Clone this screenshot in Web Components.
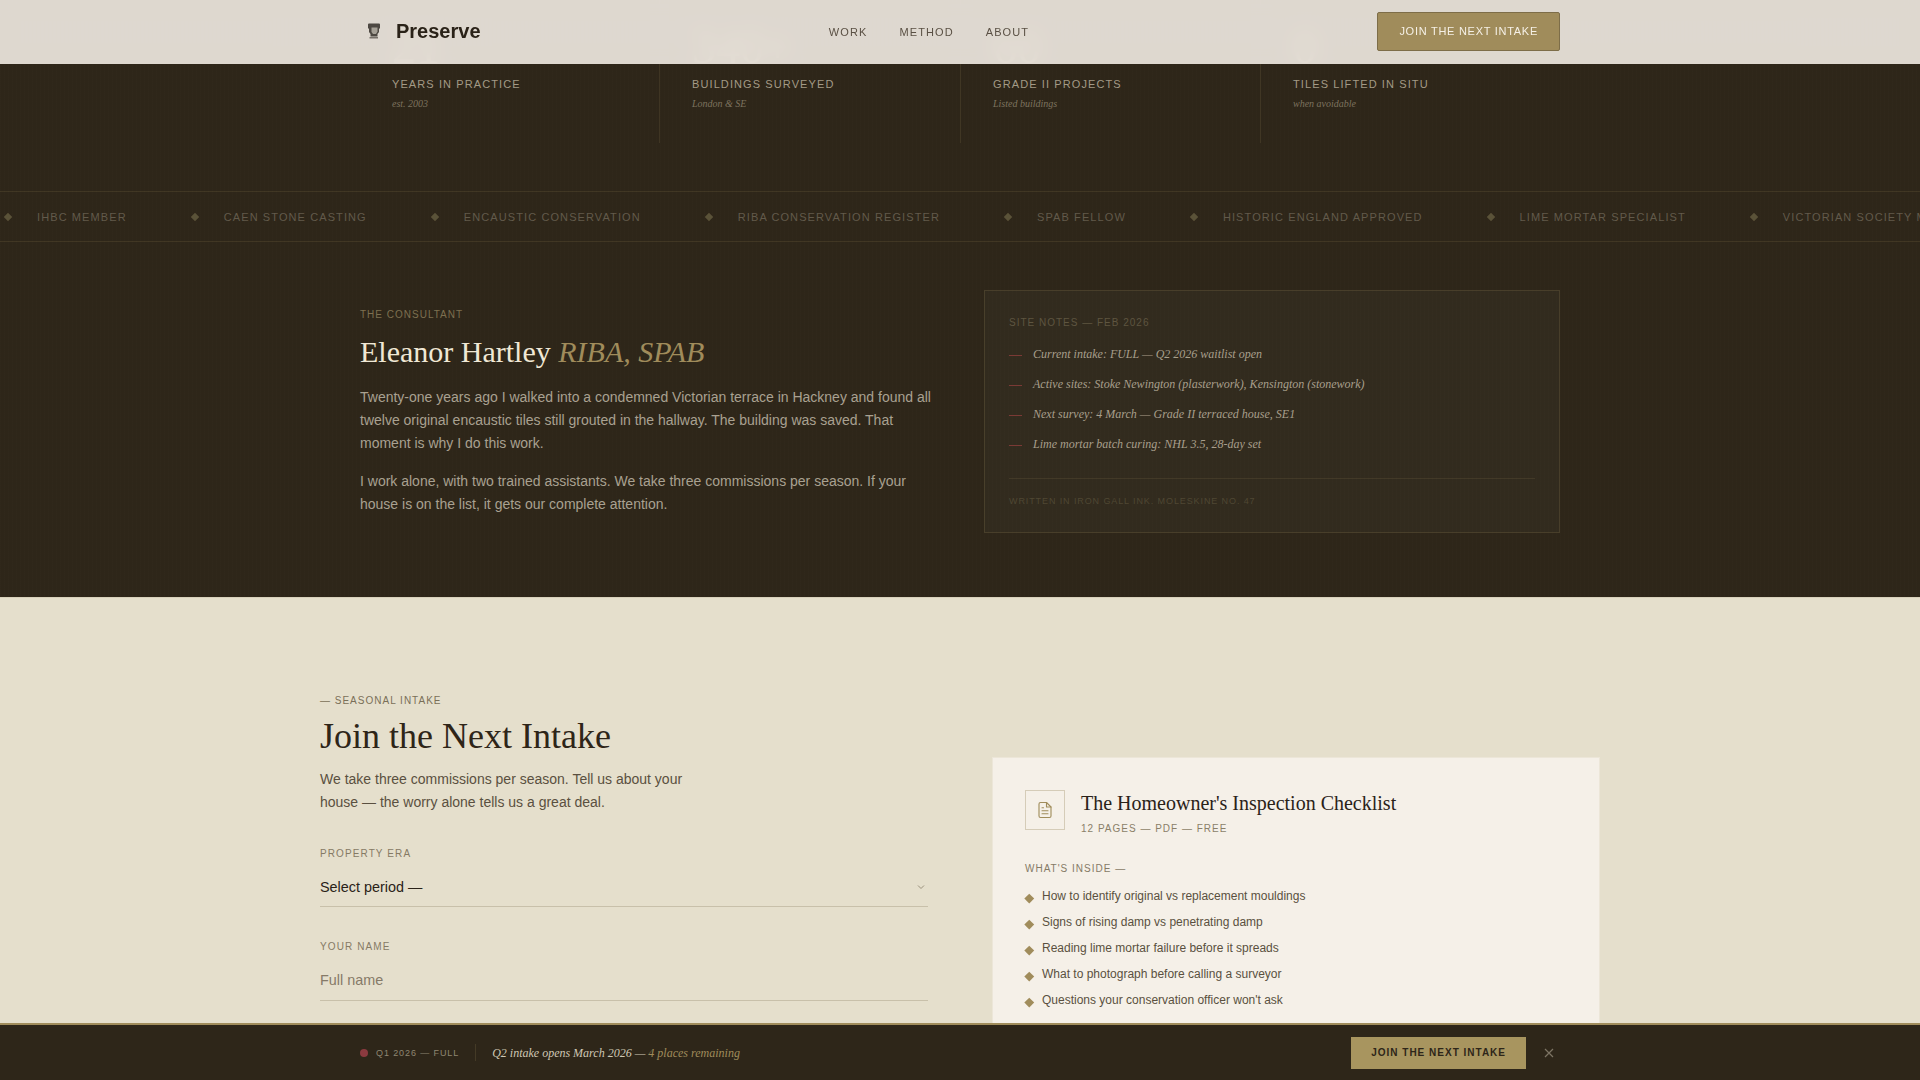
<!DOCTYPE html>
<html lang="en">
<head>
<meta charset="utf-8">
<title>Preserve</title>
<style>
  html, body { margin: 0; height: 1080px; overflow: hidden; background: #2e2619; }
  body {
    font-family: "Liberation Sans", Arial, sans-serif;
    background-image:
      repeating-linear-gradient(90deg, rgba(255, 255, 255, 0.006) 0 1px, transparent 1px 4px),
      repeating-linear-gradient(0deg, rgba(0, 0, 0, 0.012) 0 1px, transparent 1px 4px);
  }
  main { display: block; margin-top: -13px; }
</style>
</head>
<body>
<site-nav></site-nav>
<main>
  <stat-row>
    <stat-item num="21" label="Years in practice" note="est. 2003"></stat-item>
    <stat-item num="340+" label="Buildings surveyed" note="London &amp; SE"></stat-item>
    <stat-item num="60" label="Grade II projects" note="Listed buildings"></stat-item>
    <stat-item num="0" label="Tiles lifted in situ" note="when avoidable"></stat-item>
  </stat-row>
  <cred-strip></cred-strip>
  <consultant-section>
    <site-notes></site-notes>
  </consultant-section>
  <intake-section>
    <form-field label="Property era" value="Select period —" kind="select"></form-field>
    <form-field label="Your name" value="Full name"></form-field>
    <checklist-card slot="aside"></checklist-card>
  </intake-section>
</main>
<intake-bar></intake-bar>

<script>
class SiteNav extends HTMLElement {
  constructor() {
    super();
    this.attachShadow({ mode: 'open' });
    this.shadowRoot.innerHTML = `
      <style>
        :host {
          display: block;
          position: fixed;
          top: 0; left: 0; right: 0;
          z-index: 10;
          box-sizing: border-box;
          height: 64px;
          padding-bottom: 1px;
          background: rgba(229, 223, 215, 0.965);
          backdrop-filter: blur(8px);
        }
        .inner {
          box-sizing: border-box;
          width: 1200px;
          height: 100%;
          margin: 0 auto;
          display: flex;
          justify-content: space-between;
          align-items: center;
        }
        .logo {
          display: flex;
          align-items: center;
          gap: 15px;
          padding-left: 7px;
          font-size: 20px;
          font-weight: 700;
          color: #2a2218;
        }
        .logo svg { display: block; margin-top: -2px; }
        nav {
          display: flex;
          gap: 32px;
          font-size: 11px;
          letter-spacing: 0.1em;
          color: #5a5044;
        }
        .cta span {
          display: block;
          box-sizing: border-box;
          height: 39px;
          line-height: 37px;
          padding: 0 21px;
          font-size: 11px;
          letter-spacing: 0.066em;
          color: #f5f0e6;
          background: #a08c5b;
          border: 1px solid #7d6d48;
          border-radius: 2px;
        }
      </style>
      <div class="inner">
        <div class="logo">
          <svg width="14" height="16" viewBox="0 0 14 16">
            <path d="M1 1.500q0-1 1-1h10q1 0 1 1V5l-1 1v3l-1.500 2v2.500h-7V11L2 9V6L1 5z" fill="#4d4842"/>
            <path d="M4.500 4.500h6v4l-1.500 2.500H6L4.500 9z" fill="#a5a096"/>
            <path d="M2.500 14h8.500v1.500H2.500z" fill="#77716a"/>
          </svg>
          <span>Preserve</span>
        </div>
        <nav><span>WORK</span><span>METHOD</span><span>ABOUT</span></nav>
        <div class="cta"><span>JOIN THE NEXT INTAKE</span></div>
      </div>
    `;
  }
}
customElements.define('site-nav', SiteNav);

class StatRow extends HTMLElement {
  constructor() {
    super();
    this.attachShadow({ mode: 'open' });
    this.shadowRoot.innerHTML = `
      <style>
        :host {
          display: grid;
          grid-template-columns: 300px 301px 300px 299px;
          justify-content: center;
          padding-bottom: 48px;
        }
      </style>
      <slot></slot>
    `;
  }
}
customElements.define('stat-row', StatRow);

class StatItem extends HTMLElement {
  constructor() {
    super();
    this.attachShadow({ mode: 'open' });
    const num = this.getAttribute('num');
    const label = this.getAttribute('label');
    const note = this.getAttribute('note');
    this.shadowRoot.innerHTML = `
      <style>
        :host {
          display: block;
          box-sizing: border-box;
          padding: 36px 32px 32px;
          border-right: 1px solid rgba(160, 140, 91, 0.15);
        }
        :host(:last-child) { border-right: none; }
        .num {
          font: 48px/48px "Liberation Serif", serif;
          color: #f0e4c8;
          margin-bottom: 5px;
        }
        .label {
          font-size: 11px;
          line-height: 16px;
          letter-spacing: 0.1em;
          text-transform: uppercase;
          color: #a39a86;
        }
        .note {
          margin-top: 5px;
          font: italic 10px/14px "Liberation Serif", serif;
          color: #7d735f;
        }
      </style>
      <div class="num">${num}</div>
      <div class="label">${label}</div>
      <div class="note">${note}</div>
    `;
  }
}
customElements.define('stat-item', StatItem);

class CredStrip extends HTMLElement {
  constructor() {
    super();
    this.attachShadow({ mode: 'open' });
    const items = ['IHBC Member', 'Caen Stone Casting', 'Encaustic Conservation', 'RIBA Conservation Register',
      'SPAB Fellow', 'Historic England Approved', 'Lime Mortar Specialist', 'Victorian Society Member'];
    this.shadowRoot.innerHTML = `
      <style>
        :host {
          display: block;
          overflow: hidden;
          border-top: 1px solid rgba(160, 140, 91, 0.16);
          border-bottom: 1px solid rgba(160, 140, 91, 0.16);
        }
        .track {
          display: flex;
          width: max-content;
          height: 49px;
          align-items: center;
          margin-left: 5px;
        }
        .item {
          display: flex;
          align-items: center;
          gap: 26px;
          padding-right: 65px;
          font-size: 11px;
          letter-spacing: 0.1em;
          text-transform: uppercase;
          color: #625a4b;
        }
        i {
          display: block;
          width: 6px;
          height: 6px;
          transform: rotate(45deg);
          background: #5a5238;
        }
      </style>
      <div class="track">
        ${items.map(t => `<div class="item"><i></i><span>${t}</span></div>`).join('')}
      </div>
    `;
  }
}
customElements.define('cred-strip', CredStrip);

class ConsultantSection extends HTMLElement {
  constructor() {
    super();
    this.attachShadow({ mode: 'open' });
    this.shadowRoot.innerHTML = `
      <style>
        :host {
          display: grid;
          grid-template-columns: 576px 576px;
          gap: 48px;
          justify-content: center;
          align-items: start;
          padding: 48px 0 64px;
        }
        .copy { padding-top: 18px; }
        .eyebrow {
          font-size: 10px;
          line-height: 14px;
          letter-spacing: 0.1em;
          color: #7d7050;
        }
        h2 {
          margin: 10px 0 14px;
          font: 400 30px/40px "Liberation Serif", serif;
          color: #f0e8d5;
        }
        h2 em { color: #a08c5b; }
        p {
          margin: 0 0 15px;
          font-size: 14px;
          line-height: 23px;
          color: #a9a191;
        }
        p:last-child { margin-bottom: 0; }
      </style>
      <div class="copy">
        <div class="eyebrow">THE CONSULTANT</div>
        <h2>Eleanor Hartley <em>RIBA, SPAB</em></h2>
        <p>Twenty-one years ago I walked into a condemned Victorian terrace in Hackney and found all twelve original encaustic tiles still grouted in the hallway. The building was saved. That moment is why I do this work.</p>
        <p>I work alone, with two trained assistants. We take three commissions per season. If your house is on the list, it gets our complete attention.</p>
      </div>
      <slot></slot>
    `;
  }
}
customElements.define('consultant-section', ConsultantSection);

class SiteNotes extends HTMLElement {
  constructor() {
    super();
    this.attachShadow({ mode: 'open' });
    const notes = ['Current intake: FULL — Q2 2026 waitlist open',
      'Active sites: Stoke Newington (plasterwork), Kensington (stonework)',
      'Next survey: 4 March — Grade II terraced house, SE1',
      'Lime mortar batch curing: NHL 3.5, 28-day set'];
    this.shadowRoot.innerHTML = `
      <style>
        :host {
          display: block;
          box-sizing: border-box;
          height: 243px;
          padding: 25px 24px 0;
          background: rgba(255, 250, 235, 0.025);
          border: 1px solid rgba(160, 140, 91, 0.2);
        }
        .head {
          font-size: 10px;
          line-height: 14px;
          letter-spacing: 0.1em;
          color: #5e5540;
          margin-bottom: 9px;
        }
        .note {
          display: flex;
          gap: 11px;
          height: 30px;
          align-items: center;
          font: italic 12px/16px "Liberation Serif", serif;
          color: #a89f8c;
        }
        .note i {
          display: block;
          width: 13px;
          height: 1px;
          margin-top: 2px;
          background: #7a3a35;
        }
        .foot {
          margin-top: 19px;
          padding-top: 16px;
          border-top: 1px solid rgba(160, 140, 91, 0.15);
          font-size: 9px;
          line-height: 13px;
          letter-spacing: 0.1em;
          color: #4f4733;
        }
      </style>
      <div class="head">SITE NOTES — FEB 2026</div>
      ${notes.map(n => `<div class="note"><i></i><span>${n}</span></div>`).join('')}
      <div class="foot">WRITTEN IN IRON GALL INK. MOLESKINE NO. 47</div>
    `;
  }
}
customElements.define('site-notes', SiteNotes);

class IntakeSection extends HTMLElement {
  constructor() {
    super();
    this.attachShadow({ mode: 'open' });
    this.shadowRoot.innerHTML = `
      <style>
        :host {
          display: block;
          background: #e5dfcc;
          border-top: 1px solid #d8d1bb;
          padding: 96px 0 120px;
        }
        .grid {
          display: grid;
          grid-template-columns: 608px 608px;
          gap: 64px;
          justify-content: center;
          align-items: start;
        }
        .eyebrow {
          font-size: 10px;
          line-height: 14px;
          letter-spacing: 0.1em;
          color: #7a6f58;
        }
        h2 {
          margin: 6px 0 10px;
          font: 400 36px/44px "Liberation Serif", serif;
          color: #2e2518;
        }
        p {
          margin: 0 0 33px;
          width: 400px;
          font-size: 14px;
          line-height: 23px;
          color: #5a5040;
        }
        aside { margin-top: 63px; }
      </style>
      <div class="grid">
        <div>
          <div class="eyebrow">— SEASONAL INTAKE</div>
          <h2>Join the Next Intake</h2>
          <p>We take three commissions per season. Tell us about your house — the worry alone tells us a great deal.</p>
          <slot></slot>
        </div>
        <aside><slot name="aside"></slot></aside>
      </div>
    `;
  }
}
customElements.define('intake-section', IntakeSection);

class FormField extends HTMLElement {
  constructor() {
    super();
    this.attachShadow({ mode: 'open' });
    const isSelect = this.getAttribute('kind') === 'select';
    this.shadowRoot.innerHTML = `
      <style>
        :host { display: block; margin-bottom: 33px; }
        label {
          display: block;
          font-size: 10px;
          line-height: 14px;
          letter-spacing: 0.11em;
          text-transform: uppercase;
          color: #857a64;
          margin-bottom: 9px;
        }
        .box {
          display: flex;
          justify-content: space-between;
          align-items: center;
          box-sizing: border-box;
          height: ${isSelect ? 37 : 38}px;
          padding-bottom: ${isSelect ? 2 : 3}px;
          font-size: 14.400px;
          color: ${isSelect ? '#2a2218' : '#857a68'};
          border-bottom: 1px solid #c8c0aa;
        }
        svg { margin-right: 3px; }
      </style>
      <label>${this.getAttribute('label')}</label>
      <div class="box">
        <span>${this.getAttribute('value')}</span>
        ${isSelect ? '<svg width="8" height="8" viewBox="0 0 8 8" fill="none" stroke="#9a917c"><path d="M1 2.500l3 3 3-3"/></svg>' : ''}
      </div>
    `;
  }
}
customElements.define('form-field', FormField);

class ChecklistCard extends HTMLElement {
  constructor() {
    super();
    this.attachShadow({ mode: 'open' });
    const points = ['How to identify original vs replacement mouldings',
      'Signs of rising damp vs penetrating damp',
      'Reading lime mortar failure before it spreads',
      'What to photograph before calling a surveyor',
      "Questions your conservation officer won't ask"];
    this.shadowRoot.innerHTML = `
      <style>
        :host {
          display: block;
          box-sizing: border-box;
          height: 321px;
          padding: 32px;
          background: #f5f0e8;
          border: 1px solid #ece6d8;
        }
        .top { display: flex; gap: 16px; margin-bottom: 26px; }
        .icon {
          display: flex;
          align-items: center;
          justify-content: center;
          box-sizing: border-box;
          width: 40px;
          height: 40px;
          border: 1px solid #d5ccb8;
        }
        h3 {
          margin: 1px 0 7px;
          font: 400 20px/24px "Liberation Serif", serif;
          color: #2a2218;
        }
        .sub {
          font-size: 10px;
          line-height: 14px;
          letter-spacing: 0.1em;
          color: #8a7f68;
        }
        .inside {
          font-size: 10px;
          line-height: 14px;
          letter-spacing: 0.1em;
          color: #857a66;
          margin-bottom: 7px;
        }
        .point {
          display: flex;
          gap: 8.500px;
          height: 26px;
          align-items: center;
          font-size: 12px;
          color: #5a5040;
        }
        .point i {
          display: block;
          flex: none;
          width: 6.500px;
          height: 6.500px;
          margin: 5px 1px 0 1px;
          transform: rotate(45deg);
          background: #a08c5b;
        }
      </style>
      <div class="top">
        <div class="icon">
          <svg width="18" height="18" viewBox="0 0 24 24" fill="none" stroke="#a08c5b" stroke-width="1.500" stroke-linecap="round" stroke-linejoin="round">
            <path d="M14 2H6a2 2 0 0 0-2 2v16a2 2 0 0 0 2 2h12a2 2 0 0 0 2-2V8z"/>
            <path d="M14 2v6h6"/><path d="M8 13h8"/><path d="M8 17h8"/><path d="M8 9h2"/>
          </svg>
        </div>
        <div>
          <h3>The Homeowner's Inspection Checklist</h3>
          <div class="sub">12 PAGES — PDF — FREE</div>
        </div>
      </div>
      <div class="inside">WHAT'S INSIDE —</div>
      ${points.map(p => `<div class="point"><i></i><span>${p}</span></div>`).join('')}
    `;
  }
}
customElements.define('checklist-card', ChecklistCard);

class IntakeBar extends HTMLElement {
  constructor() {
    super();
    this.attachShadow({ mode: 'open' });
    this.shadowRoot.innerHTML = `
      <style>
        :host {
          display: block;
          position: fixed;
          left: 0; right: 0; bottom: 0;
          z-index: 10;
          box-sizing: border-box;
          height: 57px;
          background: #2e2619;
          border-top: 2px solid #a08c5b;
        }
        .inner {
          width: 1200px;
          height: 100%;
          margin: 0 auto;
          display: flex;
          align-items: center;
        }
        .dot {
          width: 8px;
          height: 8px;
          border-radius: 50%;
          background: #8b3a3f;
        }
        .status {
          margin-left: 8px;
          padding-right: 16px;
          font-size: 9px;
          letter-spacing: 0.1em;
          color: #8e8672;
        }
        .sep { width: 1px; height: 17px; background: rgba(160, 140, 91, 0.2); }
        .msg {
          margin: 1px 0 0 16px;
          font: italic 12px "Liberation Serif", serif;
          color: #d0c8b5;
        }
        .msg span { color: #a08c5b; }
        .join {
          margin-left: auto;
          padding: 0 20px;
          height: 32px;
          line-height: 32px;
          font-size: 10px;
          font-weight: 700;
          letter-spacing: 0.1em;
          color: #2e2619;
          background: #a8955f;
        }
        .close { margin: 0 6px 0 18px; display: block; }
      </style>
      <div class="inner">
        <div class="dot"></div>
        <div class="status">Q1 2026 — FULL</div>
        <div class="sep"></div>
        <div class="msg">Q2 intake opens March 2026 — <span>4 places remaining</span></div>
        <div class="join">JOIN THE NEXT INTAKE</div>
        <svg class="close" width="10" height="10" viewBox="0 0 10 10" stroke="#7d7464" stroke-width="1.200"><path d="M1 1l8 8M9 1l-8 8"/></svg>
      </div>
    `;
  }
}
customElements.define('intake-bar', IntakeBar);
</script>
</body>
</html>
